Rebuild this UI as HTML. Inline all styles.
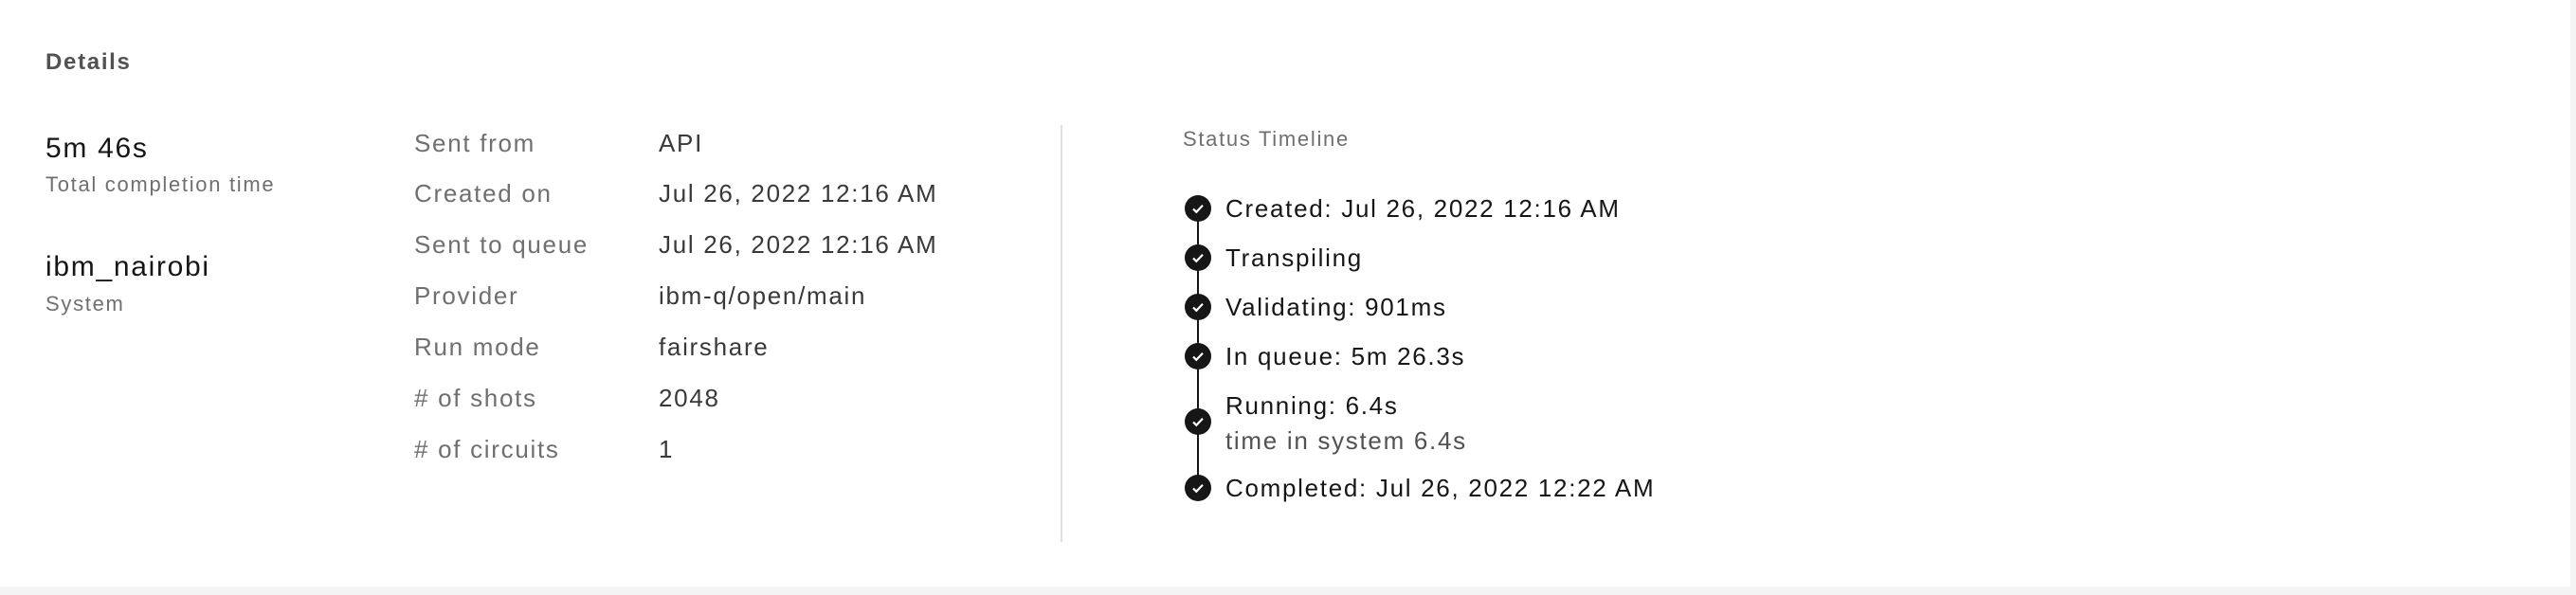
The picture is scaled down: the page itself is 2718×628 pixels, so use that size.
<!DOCTYPE html>
<html><head><meta charset="utf-8"><style>
*{margin:0;padding:0;box-sizing:border-box}
body{width:2718px;height:628px;background:#f4f4f4;position:relative;overflow:hidden;font-family:"Liberation Sans",sans-serif;letter-spacing:1.7px}
#card{position:absolute;left:0;top:0;width:2712px;height:619px;background:#fff}
.t{position:absolute;white-space:nowrap;line-height:40px;height:40px}
.lbl{color:#6f6f6f;font-size:26px}
.val{color:#393939;font-size:26px}
.tl{color:#161616;font-size:26px}
.ic{position:absolute;width:28px;height:28px;border-radius:50%;background:#161616}
.ic svg{position:absolute;left:0;top:0}
</style></head><body>
<div id="card">
<div class="t" style="left:48px;top:46px;font-size:24px;font-weight:bold;color:#525252">Details</div>

<div class="t" style="left:48px;top:137px;font-size:30px;color:#161616">5m 46s</div>
<div class="t" style="left:48px;top:175px;font-size:22px;color:#6f6f6f">Total completion time</div>
<div class="t" style="left:48px;top:262px;font-size:30px;color:#161616">ibm_nairobi</div>
<div class="t" style="left:48px;top:301px;font-size:22px;color:#6f6f6f">System</div>

<div class="t lbl" style="left:437px;top:131px">Sent from</div>
<div class="t lbl" style="left:437px;top:184px">Created on</div>
<div class="t lbl" style="left:437px;top:238px">Sent to queue</div>
<div class="t lbl" style="left:437px;top:292px">Provider</div>
<div class="t lbl" style="left:437px;top:346px">Run mode</div>
<div class="t lbl" style="left:437px;top:400px"># of shots</div>
<div class="t lbl" style="left:437px;top:454px"># of circuits</div>

<div class="t val" style="left:695px;top:131px">API</div>
<div class="t val" style="left:695px;top:184px">Jul 26, 2022 12:16 AM</div>
<div class="t val" style="left:695px;top:238px">Jul 26, 2022 12:16 AM</div>
<div class="t val" style="left:695px;top:292px">ibm-q/open/main</div>
<div class="t val" style="left:695px;top:346px">fairshare</div>
<div class="t val" style="left:695px;top:400px">2048</div>
<div class="t val" style="left:695px;top:454px">1</div>

<div style="position:absolute;left:1119px;top:132px;width:2px;height:440px;background:#e0e0e0"></div>

<div class="t" style="left:1248px;top:127px;font-size:22px;color:#6f6f6f">Status Timeline</div>

<div style="position:absolute;left:1263px;top:220px;width:2px;height:295px;background:#161616"></div>

<div class="ic" style="left:1250px;top:206px"><svg width="28" height="28"><path d="M9 14.5l3.3 3.3 6.7-7" fill="none" stroke="#fff" stroke-width="2.2"/></svg></div>
<div class="ic" style="left:1250px;top:258px"><svg width="28" height="28"><path d="M9 14.5l3.3 3.3 6.7-7" fill="none" stroke="#fff" stroke-width="2.2"/></svg></div>
<div class="ic" style="left:1250px;top:310px"><svg width="28" height="28"><path d="M9 14.5l3.3 3.3 6.7-7" fill="none" stroke="#fff" stroke-width="2.2"/></svg></div>
<div class="ic" style="left:1250px;top:362px"><svg width="28" height="28"><path d="M9 14.5l3.3 3.3 6.7-7" fill="none" stroke="#fff" stroke-width="2.2"/></svg></div>
<div class="ic" style="left:1250px;top:431px"><svg width="28" height="28"><path d="M9 14.5l3.3 3.3 6.7-7" fill="none" stroke="#fff" stroke-width="2.2"/></svg></div>
<div class="ic" style="left:1250px;top:501px"><svg width="28" height="28"><path d="M9 14.5l3.3 3.3 6.7-7" fill="none" stroke="#fff" stroke-width="2.2"/></svg></div>

<div class="t tl" style="left:1293px;top:200px">Created: Jul 26, 2022 12:16 AM</div>
<div class="t tl" style="left:1293px;top:252px">Transpiling</div>
<div class="t tl" style="left:1293px;top:304px">Validating: 901ms</div>
<div class="t tl" style="left:1293px;top:356px">In queue: 5m 26.3s</div>
<div class="t tl" style="left:1293px;top:408px">Running: 6.4s</div>
<div class="t" style="left:1293px;top:445px;font-size:26px;color:#525252">time in system 6.4s</div>
<div class="t tl" style="left:1293px;top:495px">Completed: Jul 26, 2022 12:22 AM</div>
</div>
</body></html>
